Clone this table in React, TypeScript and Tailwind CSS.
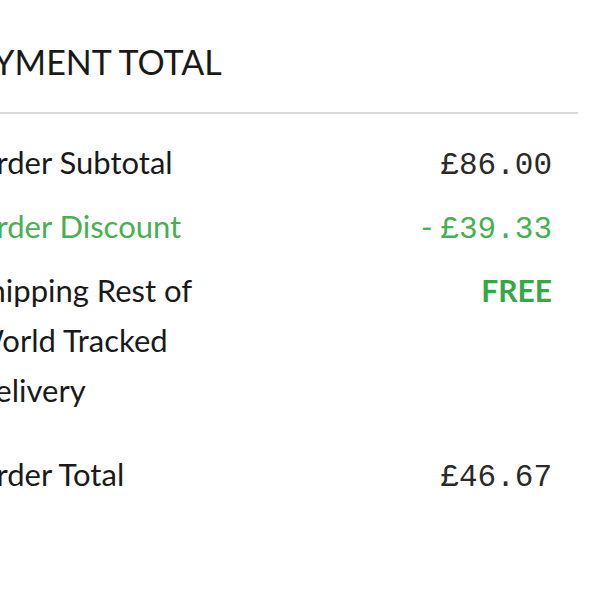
import React from "react";

export default function App() {
  return (
    <div className="w-[600px] h-[600px] overflow-hidden bg-white">
      <div className="-ml-[28px] w-[606px] pt-[40px]">
        <div className="-ml-[20px] pl-[2px] text-[34px] leading-[44px] text-[#1a1a1a] font-[Lato,sans-serif]">
          PAYMENT TOTAL
        </div>
        <div className="mt-[28px] h-[2px] bg-[#d9d9d9]" />
        <div className="pr-[26px] pt-[23px] font-[Lato,sans-serif] text-[31px] leading-[50px] text-[#1a1a1a]">
          <div className="flex justify-between items-baseline">
            <span>Order Subtotal</span>
            <span className="font-['Liberation_Mono',monospace] text-[31px] text-[#2a2a2a]">£86.00</span>
          </div>
          <div className="flex justify-between items-baseline mt-[10px] text-[#46b052]">
            <span>Order Discount</span>
            <span>
              <span className="font-[Lato,sans-serif]">- </span>
              <span className="font-['Liberation_Mono',monospace] text-[31px]">£39.33</span>
            </span>
          </div>
          <div className="flex justify-between items-baseline mt-[10px]">
            <span className="w-[225px]">Shipping Rest of World Tracked Delivery</span>
            <span className="font-bold text-[#33a843] text-[30px]">FREE</span>
          </div>
          <div className="flex justify-between items-baseline mt-[34px]">
            <span>Order Total</span>
            <span className="font-['Liberation_Mono',monospace] text-[31px] text-[#2a2a2a]">£46.67</span>
          </div>
        </div>
      </div>
    </div>
  );
}
